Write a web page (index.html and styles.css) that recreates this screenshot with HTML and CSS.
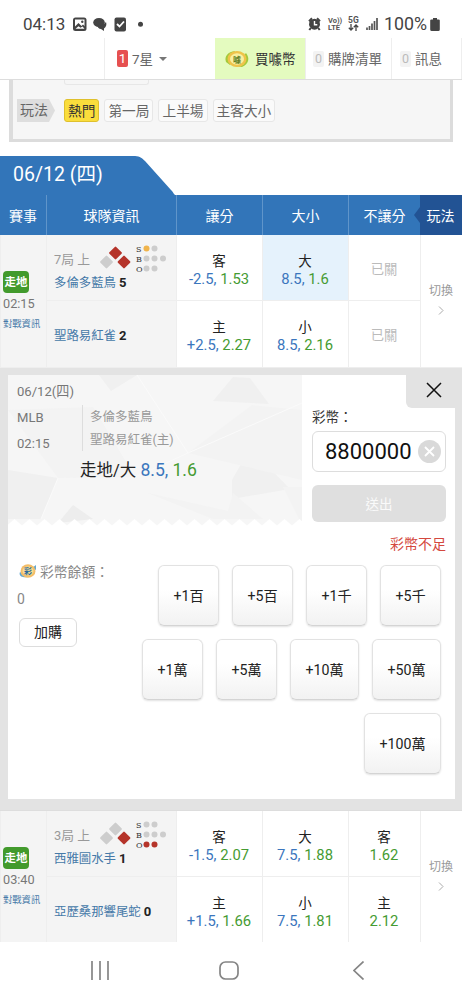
FILE: index.html
```
<!DOCTYPE html>
<html lang="zh-Hant">
<head>
    <meta charset="UTF-8">
    <meta name="viewport" content="width=device-width, initial-scale=1.0">
    <title>運彩下注</title>
    <link rel="stylesheet" href="styles.css">
</head>
<body>
    <!-- Phone status bar -->
    <div class="status-bar">
        <span class="clock">04:13</span>
        <svg class="status-left" width="80" height="16" viewBox="0 0 80 16">
            <rect x="0" y="1.5" width="13.5" height="13.5" rx="2.5" fill="#444"/>
            <path d="M2 3.500h9.500v9H2z" fill="#fff"/>
            <path d="M1.500 11l4-4 3 3 1.500-1.500 2 2V13H1.500z" fill="#444"/>
            <circle cx="9.300" cy="5.800" r="1.200" fill="#444"/>
            <path d="M2.500 12.800l3-2.600 2 1.600 2-1.300 2 2.300z" fill="#fff"/>
            <ellipse cx="26" cy="6.500" rx="5.800" ry="4.500" fill="#444"/>
            <path d="M24 8c2 2 6 2 9-2 1 3 0 5-2 6.500v2.500l-3-2c-2 0-4-2-4-5z" fill="#444"/>
            <rect x="41.500" y="1.500" width="11.500" height="14" rx="2" fill="#444"/>
            <path d="M44 8l2.500 2.500L51 5.500" fill="none" stroke="#fff" stroke-width="1.800"/>
            <circle cx="67.500" cy="8.300" r="2.500" fill="#444"/>
        </svg>
        <svg class="alarm" width="13" height="14" viewBox="0 0 13 14">
            <circle cx="6.500" cy="7.200" r="5.500" fill="#444"/>
            <path d="M1 4.200L4 1.300M12 4.200L9 1.300M2.800 11L1.300 13M10.200 11l1.500 2" stroke="#444" stroke-width="2"/>
            <path d="M6.500 4v3.800h2.800" fill="none" stroke="#fff" stroke-width="1.400"/>
        </svg>
        <span class="net net-volte">Vo))<br>LTE</span>
        <span class="net net-5g">5G<svg width="11" height="7" viewBox="0 0 11 7"><path d="M3 0v6M.8 3.800L3 6l2.200-2.200M8 7V1M5.800 3.200L8 1l2.200 2.200" fill="none" stroke="#444" stroke-width="1.300"/></svg></span>
        <svg class="signal" width="12" height="12" viewBox="0 0 12 12">
            <path d="M1 12V9.500M3.500 12V8M6 12V5.500M8.500 12V3M11 12V0" stroke="#555" stroke-width="1.700"/>
        </svg>
        <span class="battery-text">100%</span>
        <svg class="battery" width="10" height="13" viewBox="0 0 10 13">
            <path d="M3 0h4v1.500h1.500A1.300 1.300 0 0 1 9.800 3v8.500a1.500 1.500 0 0 1-1.500 1.500h-6.600a1.500 1.500 0 0 1-1.500-1.500V3a1.300 1.300 0 0 1 1.300-1.500H3z" fill="#444"/>
        </svg>
    </div>

    <!-- Site top menu -->
    <header class="top-menu">
        <div class="menu-item menu-level"><span class="badge-red">1</span>7星<span class="caret"></span></div>
        <div class="menu-item menu-buy">
            <svg width="26" height="20" viewBox="0 0 26 20">
                <path d="M2 13C0 7 4 3 11 2L6 16zM22 4c4 5 3 11-4 14l-8-1z" fill="#a4c93c"/>
                <ellipse cx="13" cy="10" rx="9.500" ry="8" fill="#efc34a"/>
                <ellipse cx="13" cy="10" rx="7" ry="5.800" fill="#f8efa0"/>
                <text x="13" y="13.500" class="coin-text coin-green">噱</text>
            </svg>
            買噱幣
        </div>
        <div class="menu-item menu-list"><span class="badge-gray">0</span>購牌清單</div>
        <div class="menu-item menu-msg"><span class="badge-gray">0</span>訊息</div>
    </header>

    <!-- Play type filter -->
    <section class="filter">
        <div class="filter-prev"></div>
        <div class="filter-row">
            <span class="filter-label">玩法</span>
            <span class="filter-tag active">熱門</span>
            <span class="filter-tag">第一局</span>
            <span class="filter-tag">上半場</span>
            <span class="filter-tag">主客大小</span>
        </div>
    </section>

    <main>
        <div class="date-tab">
            <svg width="176" height="39" viewBox="0 0 176 39"><path d="M0 0h133c6 0 8 1 12 5l26 29c3 3 3 5 5 5H0z" fill="#3275b9"/></svg>
            <span>06/12 (四)</span>
        </div>
        <div class="odds-head">
            <div>賽事</div>
            <div>球隊資訊</div>
            <div>讓分</div>
            <div>大小</div>
            <div>不讓分</div>
            <div class="head-play">玩法</div>
        </div>

        <div class="game">
            <div class="game-info">
                <span class="live">走地</span>
                <span class="time">02:15</span>
                <a class="versus">對戰資訊</a>
            </div>
            <div class="team team-away">
                <div class="inning">
                    <span>7局 上</span>
                    <svg width="62" height="28" viewBox="0 0 62 28">
                        <rect class="on" x="-4.800" y="-4.800" width="9.600" height="9.600" rx="1" transform="translate(15.500 8) rotate(45)"/>
                        <rect class="off" x="-4.800" y="-4.800" width="9.600" height="9.600" rx="1" transform="translate(6.500 17) rotate(45)"/>
                        <rect class="on" x="-4.800" y="-4.800" width="9.600" height="9.600" rx="1" transform="translate(24 17) rotate(45)"/>
                        <text x="36" y="6.500">S</text><text x="36" y="16.500">B</text><text x="36" y="26.500">O</text>
                        <circle class="strike" cx="46.500" cy="3.500" r="3"/><circle class="off" cx="54.500" cy="3.500" r="3"/>
                        <circle class="off" cx="46.500" cy="13.500" r="3"/><circle class="off" cx="54.500" cy="13.500" r="3"/><circle class="off" cx="63" cy="13.500" r="3"/>
                        <circle class="off" cx="46.500" cy="23.500" r="3"/><circle class="off" cx="54.500" cy="23.500" r="3"/>
                    </svg>
                </div>
                <div class="team-name">多倫多藍鳥 <b>5</b></div>
            </div>
            <div class="odds"><b>客</b><p><i>-2.5,</i> <em>1.53</em></p></div>
            <div class="odds selected"><b>大</b><p><i>8.5,</i> <em>1.6</em></p></div>
            <div class="odds closed">已關</div>
            <div class="switch">切換<svg width="6" height="9" viewBox="0 0 6 9"><path d="M1 .5l4 4-4 4"/></svg></div>
            <div class="team"><div class="team-name">聖路易紅雀 <b>2</b></div></div>
            <div class="odds"><b>主</b><p><i>+2.5,</i> <em>2.27</em></p></div>
            <div class="odds"><b>小</b><p><i>8.5,</i> <em>2.16</em></p></div>
            <div class="odds closed">已關</div>
        </div>

        <!-- Bet slip -->
        <section class="slip">
            <div class="slip-top">
                <div class="ticket">
                    <svg class="ticket-bg" width="294" height="151" viewBox="0 0 294 151">
                        <defs>
                            <pattern id="teeth" x="-1" y="144" width="15" height="7" patternUnits="userSpaceOnUse"><path d="M0 7V6.500L7.500 0 15 6.500V7z" fill="#fff"/></pattern>
                        </defs>
                        <rect width="294" height="151" fill="#f6f6f6"/>
                        <path d="M91 0h38l-26 16zM0 95l50 8-17 41H0zM205 26l20-24 17 1 19 26zM224 105l18-32 40 41-58 10z" fill="#f0f0f0"/>
                        <path d="M0 35l85-3 42 70-77 1zM180 78l64-48 50 5v70zM140 118l80 18 5-18 30 26h-50zM275 112h19v38z" fill="#f3f3f3"/>
                        <path d="M50 148l15-18 20 14z" fill="#ededed"/>
                        <path d="M129 0l51 78-53 24M50 103l-17 41M180 78l114-50" fill="none" stroke="#fafafa"/>
                        <rect y="144" width="294" height="7" fill="url(#teeth)"/>
                    </svg>
                    <div class="ticket-game">
                        <div class="ticket-meta"><span>06/12(四)</span><span>MLB</span><span>02:15</span></div>
                        <div class="ticket-teams"><span>多倫多藍鳥</span><span>聖路易紅雀(主)</span></div>
                    </div>
                    <div class="ticket-pick">走地/大 <i>8.5,</i> <em>1.6</em></div>
                </div>
                <div class="bet-form">
                    <label>彩幣：</label>
                    <div class="amount">8800000
                        <svg width="23" height="23" viewBox="0 0 23 23"><circle cx="11.500" cy="11.500" r="11.500" fill="#d9d9d9"/><path d="M7 7l9 9M16 7l-9 9" stroke="#fff" stroke-width="1.800"/></svg>
                    </div>
                    <div class="submit">送出</div>
                    <div class="error">彩幣不足</div>
                </div>
            </div>
            <div class="slip-bottom">
                <div class="balance">
                    <div class="balance-label">
                        <svg width="18" height="16" viewBox="0 0 18 16">
                            <path d="M1 9c-2 5 4 6 8 5zM17 2l-4 3 4 2z" fill="#63a7cf"/>
                            <ellipse cx="9" cy="8" rx="7.500" ry="6.800" fill="#f3bd68"/>
                            <ellipse cx="9" cy="8" rx="5.500" ry="4.500" fill="#f7dc95"/>
                            <text x="9" y="11" class="coin-text coin-blue">彩</text>
                        </svg>
                        彩幣餘額：
                    </div>
                    <div class="balance-num">0</div>
                    <div class="buy-more">加購</div>
                </div>
                <div class="chips">
                    <div class="chip-row"><span>+1百</span><span>+5百</span><span>+1千</span><span>+5千</span></div>
                    <div class="chip-row"><span>+1萬</span><span>+5萬</span><span class="chip-mid">+10萬</span><span class="chip-mid">+50萬</span></div>
                    <div class="chip-row"><span class="chip-big">+100萬</span></div>
                </div>
            </div>
            <div class="close"><svg width="16" height="16" viewBox="0 0 16 16"><path d="M1 1l14 14M15 1L1 15" stroke="#111" stroke-width="1.500"/></svg></div>
        </section>

        <div class="game game-last">
            <div class="game-info">
                <span class="live">走地</span>
                <span class="time">03:40</span>
                <a class="versus">對戰資訊</a>
            </div>
            <div class="team team-away">
                <div class="inning">
                    <span>3局 上</span>
                    <svg width="62" height="28" viewBox="0 0 62 28">
                        <rect class="off" x="-4.800" y="-4.800" width="9.600" height="9.600" rx="1" transform="translate(15.500 8) rotate(45)"/>
                        <rect class="off" x="-4.800" y="-4.800" width="9.600" height="9.600" rx="1" transform="translate(6.500 17) rotate(45)"/>
                        <rect class="on" x="-4.800" y="-4.800" width="9.600" height="9.600" rx="1" transform="translate(24 17) rotate(45)"/>
                        <text x="36" y="6.500">S</text><text x="36" y="16.500">B</text><text x="36" y="26.500">O</text>
                        <circle class="off" cx="46.500" cy="3.500" r="3"/><circle class="off" cx="54.500" cy="3.500" r="3"/>
                        <circle class="off" cx="46.500" cy="13.500" r="3"/><circle class="off" cx="54.500" cy="13.500" r="3"/><circle class="off" cx="63" cy="13.500" r="3"/>
                        <circle class="on" cx="46.500" cy="23.500" r="3"/><circle class="on" cx="54.500" cy="23.500" r="3"/>
                    </svg>
                </div>
                <div class="team-name">西雅圖水手 <b>1</b></div>
            </div>
            <div class="odds"><b>客</b><p><i>-1.5,</i> <em>2.07</em></p></div>
            <div class="odds"><b>大</b><p><i>7.5,</i> <em>1.88</em></p></div>
            <div class="odds"><b>客</b><p><em>1.62</em></p></div>
            <div class="switch">切換<svg width="6" height="9" viewBox="0 0 6 9"><path d="M1 .5l4 4-4 4"/></svg></div>
            <div class="team"><div class="team-name">亞歷桑那響尾蛇 <b>0</b></div></div>
            <div class="odds"><b>主</b><p><i>+1.5,</i> <em>1.66</em></p></div>
            <div class="odds"><b>小</b><p><i>7.5,</i> <em>1.81</em></p></div>
            <div class="odds"><b>主</b><p><em>2.12</em></p></div>
        </div>
    </main>

    <!-- Android navigation -->
    <nav class="phone-nav">
        <svg width="18" height="19" viewBox="0 0 18 19"><path d="M1 0v19M9 0v19M17 0v19"/></svg>
        <svg class="nav-home" width="20" height="19" viewBox="0 0 20 19"><rect x="1" y="1" width="18" height="17" rx="5.500"/></svg>
        <svg width="11" height="19" viewBox="0 0 11 19"><path d="M10.500 .5L1 9.500l9.500 9"/></svg>
    </nav>
</body>
</html>
```
FILE: styles.css
```
/* General Reset */
* {
    margin: 0;
    padding: 0;
    box-sizing: border-box;
}

body {
    width: 462px;
    height: 1000px;
    overflow: hidden;
    background-color: #fff;
    font-family: Roboto, "Noto Sans CJK TC", sans-serif;
    font-size: 14px;
    color: #222;
}

i, em {
    font-style: normal;
}

i {
    color: #3b76bd;
}

em {
    color: #459b32;
}

svg {
    display: block;
    flex: none;
}

/* Status bar */
.status-bar {
    display: flex;
    align-items: center;
    height: 38px;
    padding: 10px 22px 0 23px;
    color: #444;
}

.clock {
    width: 50px;
    font-size: 17px;
    line-height: 28px;
}

.alarm {
    margin-left: auto;
}

.net {
    font-size: 7.5px;
    line-height: 7.5px;
    font-weight: 700;
    color: #555;
}

.net-volte {
    width: 14px;
    margin-left: 7px;
    white-space: nowrap;
}

.net-5g {
    width: 11px;
    margin-left: 6px;
    font-size: 8.5px;
}

.signal {
    margin-left: 7px;
}

.battery-text {
    width: 43px;
    margin: 0 3px 0 6px;
    font-size: 17.8px;
    line-height: 28px;
    white-space: nowrap;
}

/* Top menu */
.top-menu {
    display: flex;
    height: 42px;
    padding-left: 104px;
    border-bottom: 1px solid #ddd;
}

.menu-item {
    display: flex;
    align-items: center;
    border-left: 1px solid #eee;
    font-size: 13.5px;
    line-height: 20px;
    color: #666;
    white-space: nowrap;
}

.menu-level {
    width: 111px;
    padding-left: 12px;
}

.menu-buy {
    width: 90px;
    padding-left: 9px;
    gap: 5px;
    border: 0;
    background-color: #e4fbbf;
    color: #333;
}

.menu-list {
    width: 86px;
    padding-left: 7px;
}

.menu-msg {
    width: 71px;
    padding-left: 8px;
    border-right: 1px solid #eee;
}

.badge-red {
    width: 11px;
    height: 17px;
    margin-right: 4px;
    border-radius: 2px;
    background-color: #e65050;
    color: #fff;
    line-height: 17px;
    text-align: center;
}

.badge-gray {
    width: 11px;
    height: 16px;
    margin-right: 4px;
    border-radius: 2px;
    background-color: #f3f3f3;
    color: #bbb;
    font-size: 12.5px;
    line-height: 16px;
    text-align: center;
}

.caret {
    margin-left: 6px;
    border: 4px solid transparent;
    border-top-color: #777;
    border-bottom: 0;
}

.coin-text {
    font-size: 8px;
    font-weight: 700;
    text-anchor: middle;
}

.coin-green {
    fill: #638026;
}

.coin-blue {
    fill: #28689b;
}

/* Filter */
.filter {
    height: 62px;
    margin: 0 9px;
    border: solid #dcdcdc;
    border-width: 0 3px 3px 4px;
    background-color: #f6f6f6;
}

.filter-prev {
    width: 85px;
    height: 5px;
    margin-left: 51px;
    border: 1px solid #e7e7e7;
    border-top: 0;
    border-radius: 0 0 3px 3px;
}

.filter-row {
    display: flex;
    gap: 5px;
    margin: 14px 0 0 4px;
    height: 23px;
}

.filter-label {
    width: 38px;
    margin-right: 4px;
    padding-left: 3px;
    background-color: #dedede;
    clip-path: polygon(0 0, 32px 0, 100% 50%, 32px 100%, 0 100%);
    color: #666;
    line-height: 23px;
}

.filter-tag {
    padding: 0 3px;
    border: 1px solid #e7e7e7;
    border-radius: 3px;
    background-color: #fafafa;
    color: #666;
    font-size: 13.7px;
    line-height: 22px;
}

.filter-tag.active {
    border-color: #dfc02d;
    background-color: #fadd3c;
    color: #333;
}

/* Date and table head */
.date-tab {
    display: grid;
    height: 39px;
    margin-top: 14px;
    color: #fff;
    font-size: 19.5px;
    line-height: 37px;
}

.date-tab > * {
    grid-area: 1 / 1;
}

.date-tab span {
    padding-left: 13px;
}

.odds-head {
    display: grid;
    grid-template-columns: 46px 130px 86px 86px 72px 42px;
    height: 40px;
    background-color: #3275b9;
    color: #fff;
    line-height: 42px;
    text-align: center;
}

.odds-head div {
    height: 40px;
}

.odds-head div + div {
    border-left: 1px solid #6095ca;
}

.odds-head .head-play {
    margin-left: -6px;
    padding-left: 5px;
    border: 0;
    background-color: #225394;
    clip-path: polygon(6px 0, 100% 0, 100% 100%, 6px 100%, 6px 70%, 0 50%, 6px 30%);
}

/* Games */
.game {
    display: grid;
    grid-template-columns: 46px 130px 86px 86px 72px 42px;
    grid-template-rows: 66px 67px;
}

.game > div {
    border-left: 1px solid #eee;
    border-bottom: 1px solid #eee;
}

.game-info {
    grid-row: span 2;
    display: flex;
    flex-direction: column;
    align-items: flex-start;
    padding: 36px 0 0 2px;
    background-color: #f4f4f4;
}

.live {
    width: 26px;
    height: 22px;
    border-radius: 4px;
    background-color: #429a2c;
    color: #fff;
    font-size: 11.5px;
    font-weight: 700;
    line-height: 22px;
    text-align: center;
}

.time {
    margin-top: 2px;
    color: #777;
    font-size: 12.7px;
    line-height: 18px;
}

.versus {
    margin-top: 3px;
    color: #4579a8;
    font-size: 9.3px;
    line-height: 15px;
    white-space: nowrap;
}

.team {
    display: flex;
    flex-direction: column;
    justify-content: center;
    padding: 3px 0 0 7px;
    background-color: #f4f4f4;
}

.team-away {
    justify-content: flex-start;
    padding-top: 10px;
}

.inning {
    display: flex;
    height: 28px;
    color: #999;
    font-size: 12.8px;
    line-height: 29px;
}

.inning svg {
    margin-left: 10px;
    overflow: visible;
}

.inning text {
    font: 8px "DejaVu Serif", serif;
    fill: #333;
}

.inning .on {
    fill: #b5342a;
}

.inning .off {
    fill: #cdcdcd;
}

.inning .strike {
    fill: #f0b44c;
}

.team-name {
    color: #4579a8;
    font-size: 12.4px;
    line-height: 19px;
    white-space: nowrap;
}

.team-name b {
    color: #222;
    font-size: 13px;
}

.odds {
    display: flex;
    flex-direction: column;
    align-items: center;
    padding: 17px 1px 0 0;
    font-size: 14.8px;
    line-height: 18px;
    white-space: nowrap;
}

.odds b {
    font-size: 13.5px;
    font-weight: 400;
}

.odds.selected {
    background-color: #e5f2fc;
}

.odds.closed {
    justify-content: center;
    padding: 4px 1px 0 0;
    color: #bbb;
    font-size: 13.3px;
}

.switch {
    grid-area: 1 / 6 / span 2;
    display: flex;
    flex-direction: column;
    align-items: center;
    gap: 6px;
    padding: 47px 1px 0 0;
    color: #999;
    font-size: 12px;
    line-height: 18px;
}

.switch path {
    fill: none;
    stroke: #aaa;
}

.game-last {
    height: 132px;
    border-top: 1px solid #ddd;
}

/* Bet slip */
.slip {
    position: relative;
    z-index: 0;
    height: 442px;
    border: solid #e3e3e3;
    border-width: 7px 7px 11px 8px;
    background-color: #fff;
}

.close {
    position: absolute;
    top: 0;
    right: 0;
    display: flex;
    align-items: center;
    justify-content: center;
    width: 49px;
    height: 33px;
    padding: 0 0 4px 7px;
    border-radius: 0 0 0 6px;
    background-color: #e3e3e3;
}

.slip-top {
    display: flex;
    height: 190px;
}

.ticket {
    position: relative;
    z-index: 0;
    width: 294px;
    height: 151px;
}

.ticket-bg {
    position: absolute;
    top: 0;
    left: 0;
    z-index: -1;
}

.ticket-game {
    display: flex;
    height: 84px;
    padding: 4px 0 0 9px;
    color: #888;
}

.ticket-meta {
    display: flex;
    flex-direction: column;
    width: 65px;
    color: #777;
    font-size: 13.1px;
    line-height: 26px;
}

.ticket-teams {
    display: flex;
    flex-direction: column;
    height: 46px;
    margin-top: 26px;
    padding-left: 7px;
    border-left: 1px solid #ddd;
    color: #999;
    font-size: 12.5px;
    line-height: 23px;
}

.ticket-pick {
    padding-left: 72px;
    font-size: 16.5px;
    line-height: 22px;
}

.ticket-pick i, .ticket-pick em {
    font-size: 17.6px;
}

.bet-form {
    width: 134px;
    margin-left: 10px;
    padding-top: 32px;
}

.bet-form label {
    display: block;
    height: 24px;
    color: #333;
    font-size: 13.5px;
    line-height: 20px;
}

.amount {
    display: flex;
    align-items: center;
    justify-content: space-between;
    height: 41px;
    padding: 0 4px 0 12px;
    border: 1px solid #ddd;
    border-radius: 6px;
    color: #111;
    font-size: 22px;
}

.submit {
    height: 37px;
    margin-top: 13px;
    border-radius: 6px;
    background-color: #dfdfdf;
    color: #fafafa;
    font-size: 13.5px;
    line-height: 38px;
    text-align: center;
}

.error {
    margin-top: 12px;
    color: #d4483e;
    font-size: 14px;
    line-height: 20px;
    text-align: right;
}

.slip-bottom {
    display: flex;
    justify-content: space-between;
    padding-right: 14px;
}

.balance {
    padding-left: 11px;
}

.balance-label {
    display: flex;
    align-items: center;
    gap: 3px;
    height: 11px;
    color: #888;
    font-size: 13.8px;
    white-space: nowrap;
}

.balance-num {
    margin: 13px 0 9px -2px;
    color: #888;
    line-height: 20px;
}

.buy-more {
    width: 58px;
    height: 29px;
    border: 1px solid #ddd;
    border-radius: 6px;
    line-height: 27px;
    text-align: center;
}

.chips {
    display: flex;
    flex-direction: column;
    gap: 13px;
}

.chip-row {
    display: flex;
    justify-content: flex-end;
    gap: 13px;
}

.chip-row span {
    width: 61px;
    height: 61px;
    border: 1px solid #e2e2e2;
    border-bottom-color: #d4d4d4;
    border-radius: 6px;
    background: linear-gradient(#fff 40%, #f2f2f2);
    box-shadow: 0 1px 2px rgba(0, 0, 0, 0.12);
    font-size: 14.2px;
    line-height: 61px;
    text-align: center;
}

.chip-row .chip-mid {
    width: 69px;
}

.chip-row .chip-big {
    width: 77px;
}

/* Phone navigation */
.phone-nav {
    position: fixed;
    left: 0;
    bottom: 0;
    display: flex;
    justify-content: space-between;
    align-items: center;
    width: 100%;
    height: 58px;
    padding: 0 98px 2px 91px;
    background-color: #fff;
}

.phone-nav .nav-home {
    margin-right: 5px;
}

.phone-nav svg * {
    fill: none;
    stroke: #858585;
    stroke-width: 1.7;
}
```
